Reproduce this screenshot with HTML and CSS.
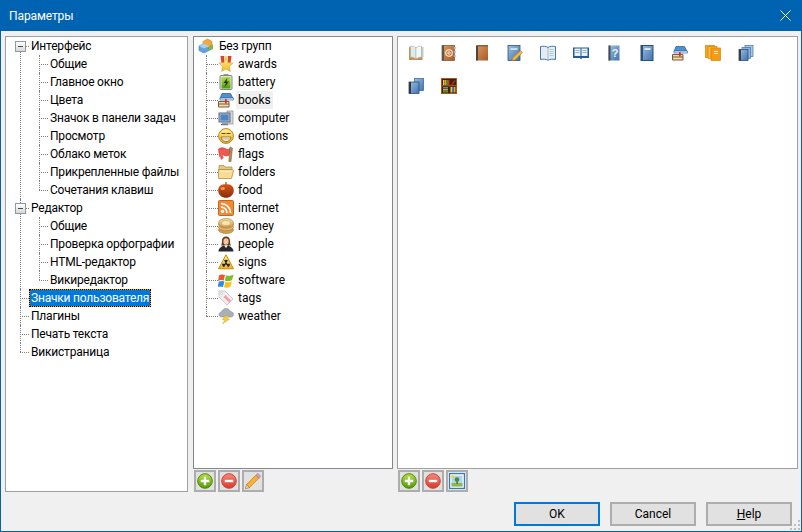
FILE: index.html
```html
<!DOCTYPE html>
<html lang="ru">
<head>
<meta charset="utf-8">
<title>Параметры</title>
<link rel="stylesheet" href="styles.css">
</head>
<body>
<svg class="defs" width="0" height="0">
  <defs>
    <linearGradient id="gBlue" x1="0" y1="0" x2="1" y2="1"><stop offset="0" stop-color="#9cc0e0"/><stop offset="1" stop-color="#3f74ad"/></linearGradient>
    <linearGradient id="gOrange" x1="0" y1="0" x2="1" y2="1"><stop offset="0" stop-color="#d99a62"/><stop offset="1" stop-color="#a85a2a"/></linearGradient>
    <linearGradient id="gGreen" x1="0" y1="0" x2="0" y2="1"><stop offset="0" stop-color="#b8e04a"/><stop offset="1" stop-color="#4f9a06"/></linearGradient>
    <linearGradient id="gRed" x1="0" y1="0" x2="0" y2="1"><stop offset="0" stop-color="#f78a7c"/><stop offset="1" stop-color="#d9362a"/></linearGradient>
    <linearGradient id="gYellow" x1="0" y1="0" x2="0" y2="1"><stop offset="0" stop-color="#fff29a"/><stop offset="1" stop-color="#f2b21f"/></linearGradient>
    <linearGradient id="gApple" x1="0" y1="0" x2="0" y2="1"><stop offset="0" stop-color="#d8531a"/><stop offset="1" stop-color="#8a2c08"/></linearGradient>
    <linearGradient id="gCoin" x1="0" y1="0" x2="0" y2="1"><stop offset="0" stop-color="#f6dfa6"/><stop offset="1" stop-color="#d29a4c"/></linearGradient>

    <symbol id="i-root" viewBox="0 0 16 16">
      <path d="M1 8l5-2.500 5 2.500v4.500L6 15l-5-2.500z" fill="#5fa3df" stroke="#3a7cb8" stroke-width=".6"/>
      <path d="M5 3.500L9.500 1 14 3.500v4L9.500 10 5 7.500z" fill="#f0a840" stroke="#c98423" stroke-width=".6"/>
      <path d="M11 8l3-1.500 1 .6v4L11 13z" fill="#7cb84a"/>
      <path d="M1 8l5 2.500L11 8 6 5.500z" fill="#a8d0f0"/>
    </symbol>
    <symbol id="i-awards" viewBox="0 0 16 16">
      <path d="M2.500 0h11l-1 7.500h-9z" fill="#d8442c"/><path d="M6 0h4v6H6z" fill="#f5d890"/>
      <path d="M8 2.500l2 4 5.200.6-3.800 3.400 1 5L8 13 3.600 15.500l1-5L.8 7.100 6 6.500z" fill="url(#gYellow)" stroke="#d69a20" stroke-width=".5"/>
    </symbol>
    <symbol id="i-battery" viewBox="0 0 16 16">
      <rect x="5.500" y="0" width="5" height="2" fill="#9a9a9a"/>
      <rect x="2" y="1.500" width="12" height="14" rx="1" fill="#dfe8df" stroke="#7b8a7b"/>
      <rect x="3.500" y="3" width="9" height="11.500" fill="url(#gGreen)"/>
      <path d="M9.500 3.500L5.500 9h2.300l-1.300 4.500L11 7.500H8.500z" fill="#233a18"/>
    </symbol>
    <symbol id="i-books" viewBox="0 0 16 16">
      <path d="M4 1.500h8.500l2.500 5H2z" fill="#4e8fd0" stroke="#24568f" stroke-width=".7"/>
      <rect x="2" y="6" width="13.500" height="2" fill="#e6f0fa" stroke="#24568f" stroke-width=".6"/>
      <path d="M.5 9.500h10.500v5.500H.5z" fill="#f0dcb4" stroke="#7d5a30"/>
      <rect x=".5" y="11.500" width="10.500" height="1" fill="#7d5a30"/>
      <rect x="7" y="7" width="1.700" height="4.500" fill="#e02c20"/>
    </symbol>
    <symbol id="i-computer" viewBox="0 0 16 16">
      <rect x="9" y="1" width="6" height="13" fill="#d8d8d8" stroke="#8a8a8a" stroke-width=".7"/>
      <rect x="1" y="3" width="11" height="9" fill="#a8b8cc" stroke="#5d6b7d"/>
      <rect x="2.500" y="4.500" width="8" height="6" fill="#4d84c8"/>
      <rect x="4" y="12" width="5" height="2" fill="#9aa4b0"/>
      <rect x="3" y="14" width="7" height="1.200" fill="#6c7684"/>
    </symbol>
    <symbol id="i-emotions" viewBox="0 0 16 16">
      <circle cx="8" cy="8" r="7.400" fill="url(#gYellow)" stroke="#b9820f"/>
      <path d="M3.500 5.500h4M8.500 5.500h4" stroke="#6b4a08" stroke-width="1.200"/>
      <path d="M3 9h10c0 3-2.300 4.500-5 4.500S3 12 3 9z" fill="#fff" stroke="#8a5d0a" stroke-width=".8"/>
      <path d="M3.500 11h9" stroke="#8a5d0a" stroke-width=".6"/>
    </symbol>
    <symbol id="i-flags" viewBox="0 0 16 16">
      <path d="M.5 3c3-2 5.500-1 7.500 0s3 .6 4-.5l-1 6.500c-1.500 1.500-3.500 1-5 .3S3 9 1.500 10.500z" fill="#ee5a50" stroke="#c0342c" stroke-width=".6"/>
      <path d="M2 10.500l2.500-1.500 1.200 3-2.700 2z" fill="#ee5a50"/>
      <path d="M12 1l2.500 1L13 15.500h-2.200z" fill="#b98a5a" stroke="#7a5630" stroke-width=".5"/>
    </symbol>
    <symbol id="i-folders" viewBox="0 0 16 16">
      <path d="M1 1.500h5l1 1.500h7v3H1z" fill="#e7c77f" stroke="#a88a44" stroke-width=".7"/>
      <path d="M.5 14.500V5.500h14l1 1.500-2 7.500z" fill="#f8dc94" stroke="#b08f44" stroke-width=".8"/>
      <path d="M2.500 7.500h11" stroke="#fff3c8"/>
    </symbol>
    <symbol id="i-food" viewBox="0 0 16 16">
      <path d="M7.500 3.500c-.6-1.500-.5-2.500 0-3.500l1.500.3C8.600 1.500 8.500 2.500 9 3.500z" fill="#6b8f1f"/>
      <path d="M8 2.500C13 1.500 15.800 5 15.800 8.500 15.800 13 12 15.800 8 15.800S.2 13 .2 8.500C.2 5 3 1.500 8 2.500z" fill="url(#gApple)"/>
      <ellipse cx="4.800" cy="6.500" rx="2.200" ry="1.500" fill="#f09a5a"/>
    </symbol>
    <symbol id="i-internet" viewBox="0 0 16 16">
      <rect x=".5" y=".5" width="15" height="15" rx="1" fill="#f08a36" stroke="#c9641a"/>
      <circle cx="4.500" cy="11.500" r="1.700" fill="#fff"/>
      <path d="M3 7c3.300 0 6 2.700 6 6" fill="none" stroke="#fff" stroke-width="1.700"/>
      <path d="M3 3.500c5.300 0 9.500 4.200 9.500 9.500" fill="none" stroke="#fff" stroke-width="1.700"/>
    </symbol>
    <symbol id="i-money" viewBox="0 0 16 16">
      <ellipse cx="8" cy="12" rx="7.500" ry="3.500" fill="#d49d4f" stroke="#a8762f" stroke-width=".6"/>
      <ellipse cx="8" cy="9.300" rx="7.500" ry="3.500" fill="#e5b971" stroke="#a8762f" stroke-width=".6"/>
      <ellipse cx="8" cy="6.800" rx="7.500" ry="3.500" fill="#eccb8a" stroke="#a8762f" stroke-width=".6"/>
      <ellipse cx="8" cy="5" rx="7.500" ry="4.500" fill="url(#gCoin)" stroke="#a8762f" stroke-width=".6"/>
      <ellipse cx="8" cy="5" rx="4.500" ry="2.500" fill="#f6e3b2" stroke="#cba25c" stroke-width=".6"/>
    </symbol>
    <symbol id="i-people" viewBox="0 0 16 16">
      <path d="M8 .5c3 0 4 2.300 4 4.500 0 2 .5 3.500 1 4.500H3c.5-1 1-2.500 1-4.500C4 2.800 5 .5 8 .5z" fill="#6a3a1e"/>
      <ellipse cx="8" cy="5.500" rx="2.600" ry="3.300" fill="#f1c6a0"/>
      <path d="M.5 15.500c0-3.500 3.500-5.500 5.500-6l2 2 2-2c2 .5 5.500 2.500 5.500 6z" fill="#27282c"/>
      <path d="M6.500 9.500L8 12l1.500-2.500z" fill="#f7f7f7"/>
    </symbol>
    <symbol id="i-signs" viewBox="0 0 16 16">
      <path d="M8 .8l7.500 14H.5z" fill="url(#gYellow)" stroke="#c08a10" stroke-linejoin="round"/>
      <circle cx="8" cy="9.800" r="1" fill="#222"/>
      <path d="M8 9.800L6 6.300a4 4 0 0 1 4 0zM8 9.800l4 0a4 4 0 0 1-2 3.500zM8 9.800l-2 3.500a4 4 0 0 1-2-3.500z" fill="#222"/>
    </symbol>
    <symbol id="i-software" viewBox="0 0 16 16">
      <path d="M1 3.500c2-1.500 4-1.300 6-.5l-1.300 5.500c-2-.8-3.700-.8-5.700.4z" fill="#ec5a2a"/>
      <path d="M8 3.200c2 .8 4.500.9 7.500-.7l-1.400 5.500c-2.700 1.500-5 1.400-7.300.7z" fill="#7fbd2c"/>
      <path d="M.8 9.800c2-1 3.500-1 5.600-.3L5 15c-2-.8-3.500-.8-5.500.3z" fill="#2f8ce0"/>
      <path d="M7.300 9.800c2.300.8 4.500.8 6.600-.6L12.500 14.500c-2.500 1.500-4.500 1.500-6.500.8z" fill="#f7c21c"/>
    </symbol>
    <symbol id="i-tags" viewBox="0 0 16 16">
      <path d="M1 1h6l8 8-6 6-8-8z" fill="#f3eeee" stroke="#c2bcbc" stroke-width=".8"/>
      <path d="M5.500 7l2-2 5.500 5.500-2 2z" fill="#f2a2a8"/>
      <circle cx="3.500" cy="3.500" r="1" fill="#fff" stroke="#aaa" stroke-width=".5"/>
    </symbol>
    <symbol id="i-weather" viewBox="0 0 16 16">
      <path d="M3.500 9C1.500 9 1 7.500 1 6.500 1 5 2.200 4 3.500 4 4 2 6 .5 8 .5c2.500 0 4 1.500 4.300 3 2 0 3.200 1.300 3.200 2.800C15.500 7.800 14.500 9 12.700 9z" fill="#a9afb5" stroke="#7d848b" stroke-width=".5"/>
      <path d="M6.500 8h4.500L9 11h2.500L4.500 16 7 12H4.500z" fill="#f6cf3a" stroke="#c69a16" stroke-width=".4"/>
    </symbol>

    <symbol id="b-open" viewBox="0 0 16 16">
      <path d="M1 2.500L2.500 1l5 1.500L13 1l1.500 1.500v12.500H1z" fill="#c88f55"/>
      <path d="M2.500 1c2 0 4.500.5 5.500 2v11c-1-1-3.500-2-5.500-2z" fill="#dfeaea" stroke="#9fb3b3" stroke-width=".5"/>
      <path d="M13.500 1c-2 0-4.500.5-5.500 2v11c1-1 3.500-2 5.500-2z" fill="#f2f7f7" stroke="#9fb3b3" stroke-width=".5"/>
      <path d="M14 2h1.500v10H14z" fill="#b9d0d0"/>
    </symbol>
    <symbol id="b-addr" viewBox="0 0 16 16">
      <rect x="1" y=".5" width="12.500" height="15" fill="url(#gOrange)" stroke="#6d5236" stroke-width=".7"/>
      <rect x="1" y=".5" width="2" height="15" fill="#5c5648"/>
      <circle cx="8" cy="8" r="3.300" fill="none" stroke="#fff2dd" stroke-width="1.100"/>
      <circle cx="8" cy="8" r="1.200" fill="none" stroke="#fff2dd" stroke-width=".9"/>
      <path d="M14 2v2M14 6v2M14 10v2" stroke="#b8c2c8" stroke-width="2"/>
    </symbol>
    <symbol id="b-brown" viewBox="0 0 16 16">
      <rect x="2" y=".5" width="12" height="15" fill="url(#gOrange)"/>
      <rect x="2" y=".5" width="2" height="15" fill="#4d4540"/>
      <rect x="3" y="0" width="11" height="1.500" fill="#8a5f3e"/>
    </symbol>
    <symbol id="b-pencil" viewBox="0 0 16 16">
      <rect x="1" y=".5" width="12" height="15" fill="url(#gBlue)" stroke="#2e5482" stroke-width=".8"/>
      <rect x="3.500" y="3" width="7" height="2" fill="#c9dcf0"/>
      <path d="M13.500 5.500l2 2L8 15l-3 .8.800-3z" fill="#f2b544" stroke="#b87a12" stroke-width=".6"/>
    </symbol>
    <symbol id="b-page" viewBox="0 0 16 16">
      <path d="M.5 1.500C3 1 6 1 8 2.500 10 1 13 1 15.500 1.500v13c-2.500-.5-5.500-.5-7.500.8-2-1.300-5-1.300-7.500-.8z" fill="#e3edf1" stroke="#3f76ac"/>
      <path d="M8 2.500v12.500" stroke="#8ea8b8" stroke-width=".7"/>
      <path d="M9.500 4.500h4M9.500 6.500h4M9.500 8.500h4M9.500 10.500h4" stroke="#aebfc8" stroke-width=".8"/>
    </symbol>
    <symbol id="b-blueopen" viewBox="0 0 16 16">
      <path d="M0 2.500h16V13H9l-1 1.500L7 13H0z" fill="#235c96"/>
      <path d="M1.500 3.500H7.500V11H1.500zM8.500 3.500H14.500V11H8.500z" fill="#eaf2f8"/>
      <path d="M2.500 5.500h4M2.500 7.500h4M9.500 5.500h4M9.500 7.500h4" stroke="#7fa2c0" stroke-width=".8"/>
    </symbol>
    <symbol id="b-help" viewBox="0 0 16 16">
      <rect x="2.500" y=".5" width="11" height="15" fill="url(#gBlue)"/>
      <rect x="2.500" y=".5" width="2" height="15" fill="#4a4a4a"/>
      <text x="9" y="11.500" class="help-mark">?</text>
    </symbol>
    <symbol id="b-blue" viewBox="0 0 16 16">
      <rect x="2" y=".5" width="12" height="15" fill="url(#gBlue)" stroke="#2c4f7a"/>
      <rect x="2" y=".5" width="2" height="15" fill="#2c4f7a"/>
      <rect x="5.500" y="3" width="6" height="2" fill="#d9e6f2"/>
    </symbol>
    <symbol id="b-orange" viewBox="0 0 16 16">
      <rect x=".5" y=".5" width="9" height="12" fill="#f5a623" stroke="#d98400" stroke-width=".7"/>
      <rect x="3" y="1.500" width="9" height="12" fill="#f9b63c" stroke="#d98400" stroke-width=".7"/>
      <rect x="6" y="3" width="9.500" height="12.500" fill="#f59a12" stroke="#d98400" stroke-width=".7"/>
      <path d="M9 6.500h4M9 8.500h4" stroke="#fff1cf"/>
    </symbol>
    <symbol id="b-stack3" viewBox="0 0 16 16">
      <rect x="7" y=".5" width="8" height="11" fill="#a8c8e6" stroke="#3f74ad" stroke-width=".7"/>
      <rect x="4" y="2.500" width="8.500" height="11" fill="#8fb6dc" stroke="#3f74ad" stroke-width=".7"/>
      <rect x="1" y="4.500" width="9" height="11" fill="url(#gBlue)" stroke="#2c4f7a" stroke-width=".8"/>
      <rect x="1" y="4.500" width="2" height="11" fill="#3a3a40"/>
    </symbol>
    <symbol id="b-stack2" viewBox="0 0 16 16">
      <rect x="6.500" y=".5" width="9" height="12" fill="url(#gBlue)" stroke="#2c5f96" stroke-width=".7"/>
      <rect x="1" y="4" width="10" height="11.500" fill="url(#gBlue)" stroke="#2c4f7a" stroke-width=".8"/>
      <rect x="1" y="4" width="2" height="11.500" fill="#35353a"/>
    </symbol>
    <symbol id="b-shelf" viewBox="0 0 16 16">
      <rect x=".5" y=".5" width="15" height="15" fill="#3b2110" stroke="#a4581c"/>
      <path d="M1 7.700h14" stroke="#a4581c" stroke-width="1.200"/>
      <rect x="2" y="2" width="1.500" height="5" fill="#f2c92c"/><rect x="3.700" y="2" width="1.500" height="5" fill="#e9a21c"/><rect x="5.400" y="2" width="1.300" height="5" fill="#6cb22c"/>
      <rect x="7" y="2" width="1.400" height="5" fill="#d8342a"/>
      <path d="M10 7l3.500-5 1 .7L11.500 7z" fill="#c92f26"/>
      <rect x="2" y="9" width="5" height="1.500" fill="#4e8fd0"/><rect x="2" y="11" width="5" height="1.500" fill="#e9a21c"/><rect x="2" y="13" width="5" height="1.500" fill="#3fa04a"/>
      <rect x="9.500" y="9" width="1.500" height="5.500" fill="#f2c92c"/><rect x="11.200" y="9" width="1.500" height="5.500" fill="#4e8fd0"/><rect x="13" y="9" width="1.500" height="5.500" fill="#e9a21c"/>
    </symbol>

    <symbol id="t-add" viewBox="0 0 16 16">
      <circle cx="8" cy="8" r="7.300" fill="url(#gGreen)" stroke="#4e8a06"/>
      <path d="M8 3.800v8.400M3.800 8h8.400" stroke="#fff" stroke-width="2.400"/>
    </symbol>
    <symbol id="t-del" viewBox="0 0 16 16">
      <circle cx="8" cy="8" r="7.300" fill="url(#gRed)" stroke="#c8453a"/>
      <path d="M3.800 8h8.400" stroke="#fff" stroke-width="2.400"/>
    </symbol>
    <symbol id="t-edit" viewBox="0 0 16 16">
      <path d="M12.800 .3l3 3-1.900 1.900-3-3z" fill="#d79ac6" stroke="#a06a96" stroke-width=".5"/>
      <path d="M10.800 2.300l3 3-9.300 9.300-3-3z" fill="#fbb02e" stroke="#c2780f" stroke-width=".7"/>
      <path d="M1.500 11.600l3 3L.3 15.800z" fill="#f3d9a8" stroke="#7a5a2a" stroke-width=".5"/>
    </symbol>
    <symbol id="t-img" viewBox="0 0 16 16">
      <rect x=".6" y=".6" width="14.800" height="14.800" fill="#fff" stroke="#3a78b0" stroke-width="1.200"/>
      <rect x="2.500" y="2.500" width="11" height="11" fill="#a9d8ee"/>
      <rect x="2.500" y="10" width="11" height="3.500" fill="#8fb84a"/>
      <circle cx="3.500" cy="3.500" r="1.500" fill="#f5d23c"/>
      <rect x="7.500" y="7.500" width="1.200" height="3.500" fill="#6a4a2a"/>
      <circle cx="8" cy="6.500" r="2.300" fill="#4f8a2a"/>
    </symbol>
  </defs>
</svg>

<div class="window">
  <header class="titlebar">
    <span class="title">Параметры</span>
    <svg class="close" width="11" height="11" viewBox="0 0 11 11"><path d="M.5.500l10 10M10.500.500l-10 10" stroke="#fff" stroke-width="1"/></svg>
  </header>
  <main class="content">
    <div class="panes">
      <nav class="pane nav-pane">
        <ul class="tree root">
          <li class="node"><span class="toggle"></span><span class="label">Интерфейс</span>
            <ul class="tree sub">
              <li class="node"><span class="label">Общие</span></li>
              <li class="node"><span class="label">Главное окно</span></li>
              <li class="node"><span class="label">Цвета</span></li>
              <li class="node"><span class="label">Значок в панели задач</span></li>
              <li class="node"><span class="label">Просмотр</span></li>
              <li class="node"><span class="label">Облако меток</span></li>
              <li class="node"><span class="label">Прикрепленные файлы</span></li>
              <li class="node"><span class="label">Сочетания клавиш</span></li>
            </ul>
          </li>
          <li class="node"><span class="toggle"></span><span class="label">Редактор</span>
            <ul class="tree sub">
              <li class="node"><span class="label">Общие</span></li>
              <li class="node"><span class="label">Проверка орфографии</span></li>
              <li class="node"><span class="label">HTML-редактор</span></li>
              <li class="node"><span class="label">Викиредактор</span></li>
            </ul>
          </li>
          <li class="node"><span class="label selected">Значки пользователя</span></li>
          <li class="node"><span class="label">Плагины</span></li>
          <li class="node"><span class="label">Печать текста</span></li>
          <li class="node"><span class="label">Викистраница</span></li>
        </ul>
      </nav>

      <div class="column">
        <section class="pane group-pane focused">
          <div class="group-root"><svg class="ico"><use href="#i-root"/></svg><span class="group-name">Без групп</span></div>
          <ul class="tree groups">
            <li class="node"><svg class="ico"><use href="#i-awards"/></svg><span class="group-name">awards</span></li>
            <li class="node"><svg class="ico"><use href="#i-battery"/></svg><span class="group-name">battery</span></li>
            <li class="node"><svg class="ico"><use href="#i-books"/></svg><span class="group-name current">books</span></li>
            <li class="node"><svg class="ico"><use href="#i-computer"/></svg><span class="group-name">computer</span></li>
            <li class="node"><svg class="ico"><use href="#i-emotions"/></svg><span class="group-name">emotions</span></li>
            <li class="node"><svg class="ico"><use href="#i-flags"/></svg><span class="group-name">flags</span></li>
            <li class="node"><svg class="ico"><use href="#i-folders"/></svg><span class="group-name">folders</span></li>
            <li class="node"><svg class="ico"><use href="#i-food"/></svg><span class="group-name">food</span></li>
            <li class="node"><svg class="ico"><use href="#i-internet"/></svg><span class="group-name">internet</span></li>
            <li class="node"><svg class="ico"><use href="#i-money"/></svg><span class="group-name">money</span></li>
            <li class="node"><svg class="ico"><use href="#i-people"/></svg><span class="group-name">people</span></li>
            <li class="node"><svg class="ico"><use href="#i-signs"/></svg><span class="group-name">signs</span></li>
            <li class="node"><svg class="ico"><use href="#i-software"/></svg><span class="group-name">software</span></li>
            <li class="node"><svg class="ico"><use href="#i-tags"/></svg><span class="group-name">tags</span></li>
            <li class="node"><svg class="ico"><use href="#i-weather"/></svg><span class="group-name">weather</span></li>
          </ul>
        </section>
        <div class="toolbar">
          <button class="tool" type="button"><svg class="ico"><use href="#t-add"/></svg></button>
          <button class="tool" type="button"><svg class="ico"><use href="#t-del"/></svg></button>
          <button class="tool" type="button"><svg class="ico"><use href="#t-edit"/></svg></button>
        </div>
      </div>

      <div class="column">
        <section class="pane icons-pane">
          <svg class="ico"><use href="#b-open"/></svg>
          <svg class="ico"><use href="#b-addr"/></svg>
          <svg class="ico"><use href="#b-brown"/></svg>
          <svg class="ico"><use href="#b-pencil"/></svg>
          <svg class="ico"><use href="#b-page"/></svg>
          <svg class="ico"><use href="#b-blueopen"/></svg>
          <svg class="ico"><use href="#b-help"/></svg>
          <svg class="ico"><use href="#b-blue"/></svg>
          <svg class="ico"><use href="#i-books"/></svg>
          <svg class="ico"><use href="#b-orange"/></svg>
          <svg class="ico"><use href="#b-stack3"/></svg>
          <svg class="ico"><use href="#b-stack2"/></svg>
          <svg class="ico"><use href="#b-shelf"/></svg>
        </section>
        <div class="toolbar">
          <button class="tool" type="button"><svg class="ico"><use href="#t-add"/></svg></button>
          <button class="tool" type="button"><svg class="ico"><use href="#t-del"/></svg></button>
          <button class="tool" type="button"><svg class="ico"><use href="#t-img"/></svg></button>
        </div>
      </div>
    </div>

    <footer class="actions">
      <button class="btn default" type="button">OK</button>
      <button class="btn" type="button">Cancel</button>
      <button class="btn" type="button"><u>H</u>elp</button>
    </footer>
    <svg class="grip" width="10" height="10" viewBox="0 0 10 10"><path d="M8 0h2v2H8zM4 4h2v2H4zM8 4h2v2H8zM0 8h2v2H0zM4 8h2v2H4zM8 8h2v2H8z" fill="#bdbdbd"/></svg>
  </main>
</div>
</body>
</html>
```

FILE: styles.css
```css
* { box-sizing: border-box; }

html, body {
  margin: 0;
  padding: 0;
  width: 802px;
  height: 532px;
  overflow: hidden;
}

body {
  font-family: Roboto, "Noto Sans", sans-serif;
  font-size: 12px;
  color: #000;
  background: #f0f0f0;
}

.defs { position: absolute; }

.help-mark {
  font-family: "Liberation Sans", sans-serif;
  font-size: 11px;
  font-weight: bold;
  fill: #e6f0fa;
  text-anchor: middle;
}

.window {
  width: 802px;
  height: 532px;
  display: flex;
  flex-direction: column;
  border: 1px solid #0063b1;
  border-top: 0;
  background: #f0f0f0;
}

.titlebar {
  height: 31px;
  flex: none;
  display: flex;
  align-items: center;
  justify-content: space-between;
  padding: 0 10px 0 8px;
  background: #0063b1;
  color: #fff;
}

.title { line-height: 16px; letter-spacing: -0.1px; }
.close { display: block; }

.content {
  position: relative;
  flex: 1;
  min-height: 0;
  display: flex;
  flex-direction: column;
  padding: 5px 4px 4px;
}

.panes {
  display: grid;
  grid-template-columns: 183px 200px 400px;
  column-gap: 5px;
  height: 456px;
}
.panes > :last-child { margin-left: -1px; }

.column {
  display: flex;
  flex-direction: column;
  min-height: 0;
}

.pane {
  background: #fff;
  border: 1px solid #a0a0a0;
}
.focused { border-color: #828790; }
.column .pane { flex: 1; min-height: 0; }

.tree {
  list-style: none;
  margin: 0;
  padding: 0;
}

.node { position: relative; }

.label, .group-name {
  display: inline-block;
  height: 18px;
  line-height: 18px;
  white-space: nowrap;
}

/* Left navigation tree */
.root .label { padding: 0 2px; letter-spacing: -0.2px; }
.root > .node > .label { vertical-align: top; }
.root > .node { margin-left: 14px; padding-left: 9px; }
.sub { margin-left: 10px; }
.sub > .node { padding-left: 9px; }

.root > .node::before,
.sub > .node::before {
  content: "";
  position: absolute;
  left: 0;
  top: 0;
  height: 100%;
  border-left: 1px dotted #808080;
}
.root > .node:first-child::before { top: 9px; height: calc(100% - 9px); }
.root > .node:last-child::before { height: 9px; }
.sub > .node:last-child::before { height: 9px; }

.root > .node::after,
.sub > .node::after {
  content: "";
  position: absolute;
  left: 0;
  top: 9px;
  width: 9px;
  border-top: 1px dotted #808080;
}

.toggle {
  position: absolute;
  left: -5px;
  top: 4px;
  width: 11px;
  height: 11px;
  z-index: 1;
  background:
    linear-gradient(#4a4a4a, #4a4a4a) center / 5px 1px no-repeat,
    linear-gradient(#fff, #d8d8d8);
  border: 1px solid #8c9aa8;
}

.selected {
  background: #0078d7;
  color: #fff;
  box-shadow: inset 0 0 0 1px #f59a23;
  outline: 1px dotted #000;
  outline-offset: -1px;
}

/* Group tree */
.ico {
  display: block;
  width: 16px;
  height: 16px;
  flex: none;
}

.group-root {
  display: flex;
  align-items: center;
  height: 18px;
  padding-left: 4px;
  gap: 5px;
  letter-spacing: -0.2px;
}

.groups { margin-left: 12px; }
.groups > .node {
  display: flex;
  align-items: center;
  height: 18px;
  padding-left: 12px;
}
.groups > .node::before {
  content: "";
  position: absolute;
  left: 0;
  top: 0;
  height: 100%;
  border-left: 1px dotted #808080;
}
.groups > .node:last-child::before { height: 9px; }
.groups > .node::after {
  content: "";
  position: absolute;
  left: 0;
  top: 9px;
  width: 12px;
  border-top: 1px dotted #808080;
}
.groups .group-name { padding: 0 2px; }
.groups .ico { margin-right: 2px; }
.current { background: #f0f0f0; }

/* Icon list */
.icons-pane {
  display: grid;
  grid-template-columns: repeat(11, 16px);
  grid-auto-rows: 16px;
  gap: 17px;
  align-content: start;
  padding: 8px 10px;
}

/* Toolbars */
.toolbar {
  flex: none;
  display: flex;
  gap: 2px;
  padding: 1px 0 0 1px;
  height: 23px;
}

.tool {
  width: 22px;
  height: 22px;
  padding: 0;
  display: flex;
  align-items: center;
  justify-content: center;
  background: #e1e1e1;
  border: 2px solid #adadad;
}

/* Footer */
.actions {
  display: flex;
  justify-content: flex-end;
  gap: 10px;
  margin-top: 10px;
  padding-right: 5px;
}

.btn {
  width: 86px;
  height: 24px;
  padding: 0;
  font: inherit;
  color: #000;
  background: #e1e1e1;
  border: 2px solid #adadad;
}
.default { border-color: #0078d7; }

.grip {
  position: absolute;
  right: 1px;
  bottom: 1px;
}
```
